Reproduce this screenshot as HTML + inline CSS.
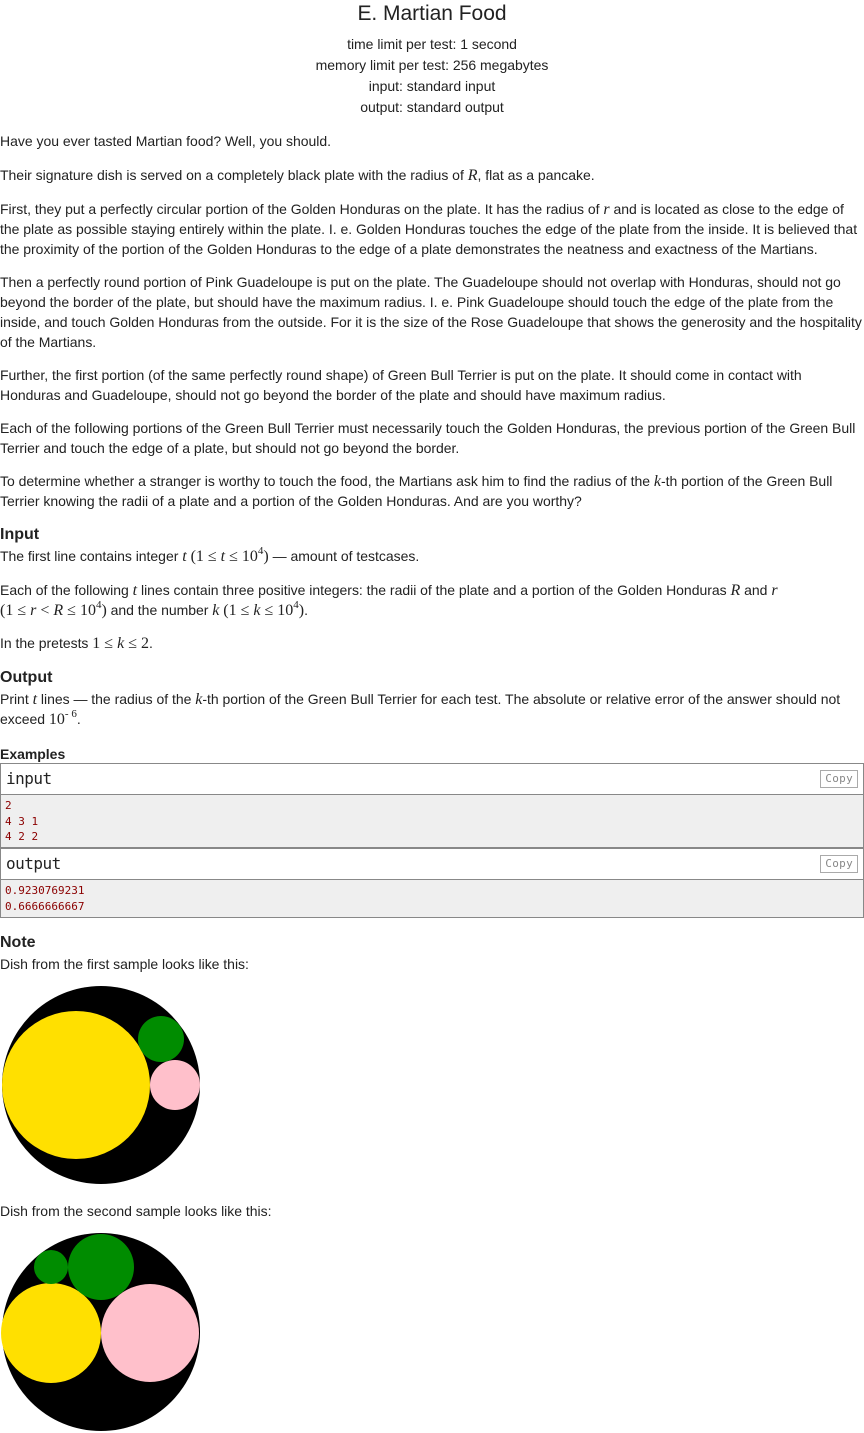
<!DOCTYPE html>
<html><head><meta charset="utf-8"><style>
body{margin:0;width:864px;height:1433px;position:relative;font-family:"Liberation Sans",sans-serif;font-size:14px;color:#222;background:#fff;overflow:hidden}
.a{position:absolute;left:0;width:864px;line-height:20px;letter-spacing:-0.02px;white-space:nowrap}
.c{text-align:center}
.m{font-family:"Liberation Serif",serif;font-size:16px;line-height:1;letter-spacing:0}
.mi{font-family:"Liberation Serif",serif;font-style:italic;font-size:16px;line-height:1;letter-spacing:0}
sup{font-size:11px;line-height:0;vertical-align:0;position:relative;top:-7px}
h3{margin:0;font-size:16px;font-weight:bold;line-height:18px;letter-spacing:0}
.box{position:absolute;left:0;width:862px;border:1px solid #888;background:#efefef}
.hd{background:#fff;height:30px;border-bottom:1px solid #888;font-family:"DejaVu Sans Mono",monospace;font-size:16px;line-height:30px;padding-left:5px;position:relative;letter-spacing:-0.5px}
.cp{position:absolute;right:5px;top:6px;border:1px solid #aaa;font-size:11px;line-height:16px;padding:0 4px;color:#888;font-family:"DejaVu Sans Mono",monospace;letter-spacing:0.3px}
pre{margin:0;padding:3px 4px;font-family:"DejaVu Sans Mono",monospace;font-size:11px;line-height:15.5px;color:#8b0000}
</style></head><body>
<div class="a c" style="top:2px;font-size:21px;line-height:24px">E. Martian Food</div>
<div class="a c" style="top:34px;line-height:21px">time limit per test: 1 second<br>memory limit per test: 256 megabytes<br>input: standard input<br>output: standard output</div>
<div class="a" style="top:131px">Have you ever tasted Martian food? Well, you should.</div>
<div class="a" style="top:165px">Their signature dish is served on a completely black plate with the radius of <span class="mi">R</span>, flat as a pancake.</div>
<div class="a" style="top:199px">First, they put a perfectly circular portion of the Golden Honduras on the plate. It has the radius of <span class="mi">r</span> and is located as close to the edge of<br>the plate as possible staying entirely within the plate. I. e. Golden Honduras touches the edge of the plate from the inside. It is believed that<br>the proximity of the portion of the Golden Honduras to the edge of a plate demonstrates the neatness and exactness of the Martians.</div>
<div class="a" style="top:272px">Then a perfectly round portion of Pink Guadeloupe is put on the plate. The Guadeloupe should not overlap with Honduras, should not go<br>beyond the border of the plate, but should have the maximum radius. I. e. Pink Guadeloupe should touch the edge of the plate from the<br>inside, and touch Golden Honduras from the outside. For it is the size of the Rose Guadeloupe that shows the generosity and the hospitality<br>of the Martians.</div>
<div class="a" style="top:365px">Further, the first portion (of the same perfectly round shape) of Green Bull Terrier is put on the plate. It should come in contact with<br>Honduras and Guadeloupe, should not go beyond the border of the plate and should have maximum radius.</div>
<div class="a" style="top:418px">Each of the following portions of the Green Bull Terrier must necessarily touch the Golden Honduras, the previous portion of the Green Bull<br>Terrier and touch the edge of a plate, but should not go beyond the border.</div>
<div class="a" style="top:471px">To determine whether a stranger is worthy to touch the food, the Martians ask him to find the radius of the <span class="mi">k</span>-th portion of the Green Bull<br>Terrier knowing the radii of a plate and a portion of the Golden Honduras. And are you worthy?</div>
<div class="a" style="top:526px"><h3>Input</h3></div>
<div class="a" style="top:546px">The first line contains integer <span class="mi">t</span> <span class="m">(1 ≤ <i>t</i> ≤ 10<sup>4</sup>)</span> — amount of testcases.</div>
<div class="a" style="top:580px">Each of the following <span class="mi">t</span> lines contain three positive integers: the radii of the plate and a portion of the Golden Honduras <span class="mi">R</span> and <span class="mi">r</span><br><span class="m">(1 ≤ <i>r</i> &lt; <i>R</i> ≤ 10<sup>4</sup>)</span> and the number <span class="mi">k</span> <span class="m">(1 ≤ <i>k</i> ≤ 10<sup>4</sup>)</span>.</div>
<div class="a" style="top:633px">In the pretests <span class="m">1 ≤ <i>k</i> ≤ 2</span>.</div>
<div class="a" style="top:669px"><h3>Output</h3></div>
<div class="a" style="top:689px">Print <span class="mi">t</span> lines — the radius of the <span class="mi">k</span>-th portion of the Green Bull Terrier for each test. The absolute or relative error of the answer should not<br>exceed <span class="m">10<sup>- 6</sup></span>.</div>
<div class="a" style="top:745px;font-weight:bold;line-height:18px">Examples</div>
<div class="box" style="top:763px;height:83px"><div class="hd">input<span class="cp">Copy</span></div><pre>2
4 3 1
4 2 2</pre></div>
<div class="box" style="top:848px;height:68px"><div class="hd">output<span class="cp">Copy</span></div><pre>0.9230769231
0.6666666667</pre></div>
<div class="a" style="top:934px"><h3>Note</h3></div>
<div class="a" style="top:954px">Dish from the first sample looks like this:</div>
<svg style="position:absolute;left:0;top:984px" width="204" height="204"><circle cx="101" cy="101" r="99" fill="#000"/><circle cx="76" cy="101" r="74" fill="#ffe000"/><circle cx="175" cy="101" r="25" fill="#ffc0cb"/><circle cx="161" cy="55" r="23" fill="#008c00"/></svg>
<div class="a" style="top:1201px">Dish from the second sample looks like this:</div>
<svg style="position:absolute;left:0;top:1231px" width="204" height="202"><circle cx="101" cy="101" r="99" fill="#000"/><circle cx="51" cy="102" r="50" fill="#ffe000"/><circle cx="150" cy="102" r="49" fill="#ffc0cb"/><circle cx="101" cy="36" r="33" fill="#008c00"/><circle cx="51" cy="36" r="17" fill="#008c00"/></svg>
</body></html>
